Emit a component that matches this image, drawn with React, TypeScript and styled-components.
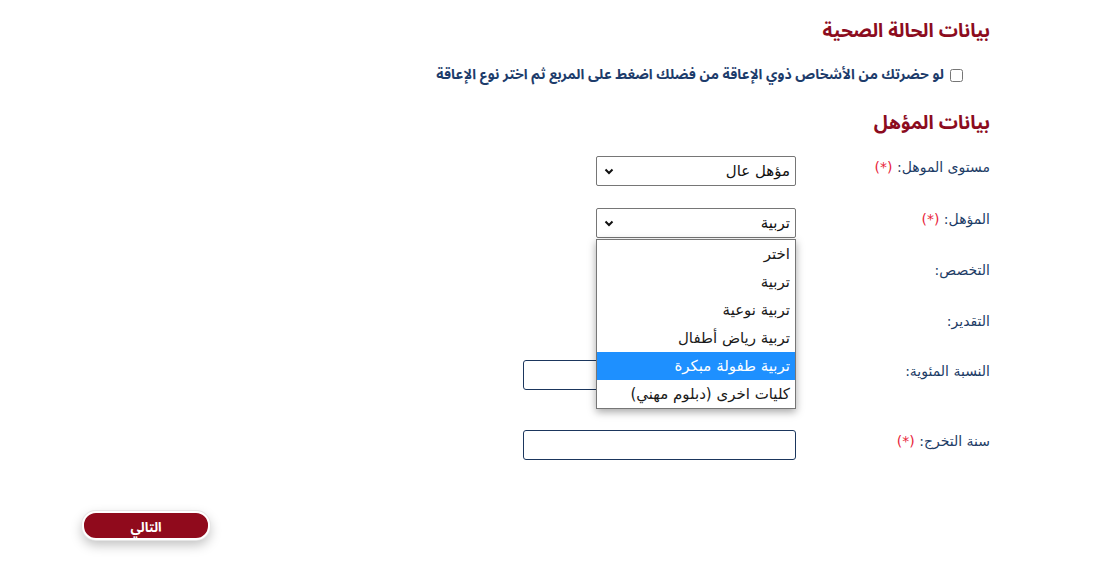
import React from "react";
import styled, { createGlobalStyle } from "styled-components";

const Global = createGlobalStyle`
  html, body { margin: 0; padding: 0; background: #fff; }
  body { font-family: "DejaVu Sans", "Noto Sans", sans-serif; }
`;

const boldFont = `"Noto Sans Arabic", "DejaVu Sans", sans-serif`;

const Page = styled.div`
  direction: rtl;
  width: 1112px;
  height: 577px;
  box-sizing: border-box;
  padding: 18px 122px 0 0;
  position: relative;
`;

const SectionTitle = styled.h2<{ $mt?: number }>`
  margin: ${(p) => p.$mt ?? 0}px 0 0 0;
  font-family: ${boldFont};
  font-size: 19px;
  line-height: 26px;
  font-weight: bold;
  color: #8c0c1e;
`;

const CheckRow = styled.label`
  display: flex;
  align-items: center;
  gap: 5px;
  margin-top: 22px;
  margin-right: 27px;
  font-family: ${boldFont};
  font-size: 14px;
  font-weight: bold;
  color: #1d3c6b;
  line-height: 18px;
`;

const Check = styled.input`
  width: 13px;
  height: 13px;
  margin: 0 0 0 1px;
`;

const Form = styled.div`
  display: flex;
  flex-direction: column;
  margin-top: 20px;
`;

const Row = styled.div<{ $mt?: number }>`
  display: flex;
  align-items: flex-start;
  margin-top: ${(p) => p.$mt ?? 0}px;
`;

const Label = styled.div`
  width: 194px;
  flex: none;
  font-size: 14px;
  line-height: 22px;
  color: #1d3c66;
`;

const Req = styled.span`
  color: #e8243a;
`;

const Field = styled.div`
  position: relative;
  width: 200px;
`;

const SelectBox = styled.div`
  height: 30px;
  box-sizing: border-box;
  border: 1px solid #767676;
  border-radius: 2px;
  background: #fff;
  display: flex;
  align-items: center;
  justify-content: space-between;
  padding: 0 5px 0 7px;
  font-size: 15px;
  color: #111;
`;

const TextInput = styled.div`
  width: 273px;
  height: 30px;
  box-sizing: border-box;
  border: 1px solid #1b365d;
  border-radius: 3px;
  background: #fff;
`;

const Dropdown = styled.ul`
  position: absolute;
  top: 31px;
  right: 0;
  width: 200px;
  box-sizing: border-box;
  margin: 0;
  padding: 0;
  list-style: none;
  background: #fff;
  border: 1px solid #767676;
  box-shadow: 0 3px 8px rgba(0, 0, 0, 0.35);
  z-index: 5;
`;

const Option = styled.li<{ $active?: boolean }>`
  height: 28px;
  line-height: 28px;
  padding: 0 5px;
  font-size: 15px;
  color: ${(p) => (p.$active ? "#fff" : "#1a1a1a")};
  background: ${(p) => (p.$active ? "#1e90ff" : "transparent")};
  white-space: nowrap;
`;

const Footer = styled.div`
  display: flex;
  justify-content: flex-end;
  margin-top: 51px;
  padding-left: 82px;
  margin-right: -122px;
`;

const NextButton = styled.button`
  width: 128px;
  height: 29px;
  box-sizing: border-box;
  border: 2px solid #fff;
  border-radius: 14px;
  background: #900a1c;
  color: #fff;
  font-family: ${boldFont};
  font-weight: bold;
  font-size: 13px;
  box-shadow: 0 0 0 1px #e6e6e6, 0 5px 12px rgba(0, 0, 0, 0.25);
  cursor: pointer;
`;

const Chevron = () => (
  <svg width="10" height="7" viewBox="0 0 10 7">
    <path d="M1.5 1.5 L5 5 L8.5 1.5" fill="none" stroke="#111" strokeWidth="2" />
  </svg>
);

const options = [
  "اختر",
  "تربية",
  "تربية نوعية",
  "تربية رياض أطفال",
  "تربية طفولة مبكرة",
  "كليات اخرى (دبلوم مهني)",
];

export default function App() {
  return (
    <>
      <Global />
      <Page>
        <SectionTitle>بيانات الحالة الصحية</SectionTitle>
        <CheckRow>
          <Check type="checkbox" />
          لو حضرتك من الأشخاص ذوي الإعاقة من فضلك اضغط على المربع ثم اختر نوع الإعاقة
        </CheckRow>
        <SectionTitle $mt={26}>بيانات المؤهل</SectionTitle>
        <Form>
          <Row>
            <Label>
              مستوى الموهل: <Req>(*)</Req>
            </Label>
            <Field>
              <SelectBox>
                <span>مؤهل عال</span>
                <Chevron />
              </SelectBox>
            </Field>
          </Row>
          <Row $mt={22}>
            <Label>
              المؤهل: <Req>(*)</Req>
            </Label>
            <Field>
              <SelectBox>
                <span>تربية</span>
                <Chevron />
              </SelectBox>
              <Dropdown>
                {options.map((o, i) => (
                  <Option key={o} $active={i === 4}>
                    {o}
                  </Option>
                ))}
              </Dropdown>
            </Field>
          </Row>
          <Row $mt={21}>
            <Label>التخصص:</Label>
            <Field>
              <SelectBox>
                <span />
                <Chevron />
              </SelectBox>
            </Field>
          </Row>
          <Row $mt={21}>
            <Label>التقدير:</Label>
            <Field>
              <SelectBox>
                <span />
                <Chevron />
              </SelectBox>
            </Field>
          </Row>
          <Row $mt={20}>
            <Label>النسبة المئوية:</Label>
            <TextInput />
          </Row>
          <Row $mt={40}>
            <Label>
              سنة التخرج: <Req>(*)</Req>
            </Label>
            <TextInput />
          </Row>
        </Form>
        <Footer>
          <NextButton>التالي</NextButton>
        </Footer>
      </Page>
    </>
  );
}
